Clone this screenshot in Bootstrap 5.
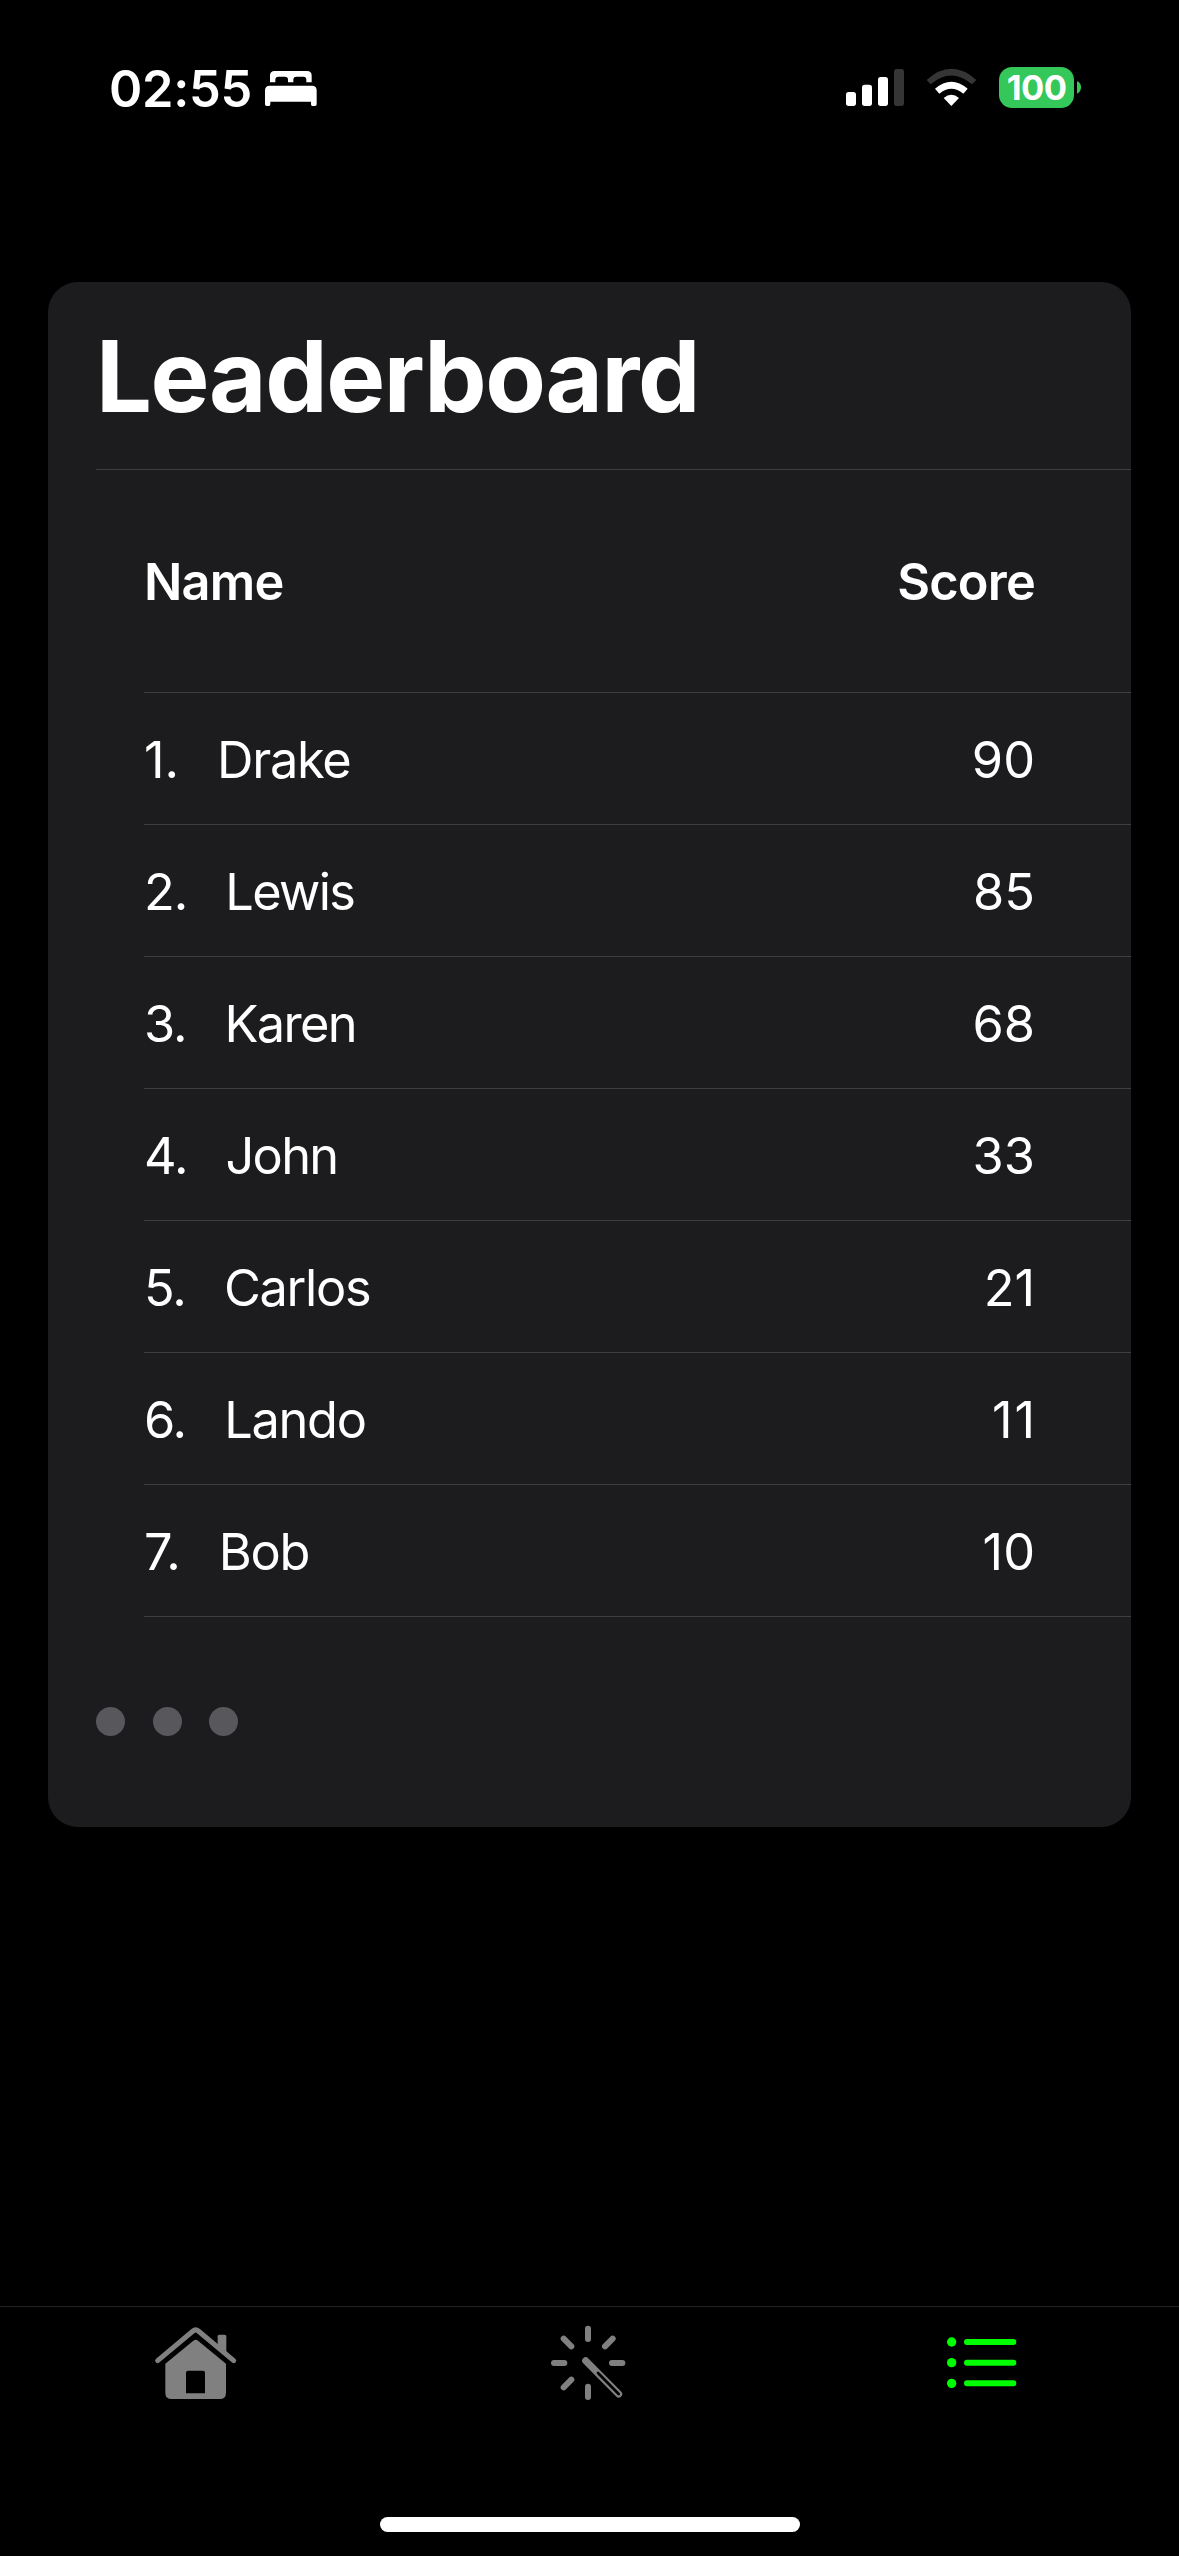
<!DOCTYPE html>
<html lang="en">
<head>
<meta charset="utf-8">
<meta name="viewport" content="width=device-width, initial-scale=1">
<title>Leaderboard</title>
<link href="https://cdn.jsdelivr.net/npm/bootstrap@5.3.0/dist/css/bootstrap.min.css" rel="stylesheet">
<style>
body{background:#000;color:#fff;font-family:Inter,"Liberation Sans",sans-serif;font-size:50.5px;line-height:1;height:2556px;overflow:hidden}
.screen{height:2556px}
.status{height:282px;padding:66px 97px 0 109px}
.clock{font-weight:600;font-size:50.5px;line-height:45px;letter-spacing:-.3px}
.status svg{display:block}
.bed{margin-left:12px}
.battery{width:75px;height:41px;margin-top:1px;border-radius:13px;background:#34c759;font-weight:700;font-size:34.5px;line-height:41px;letter-spacing:-.6px}
.board{margin:0 48px;width:1083px;height:1545px;border-radius:30px;background:#1c1c1e;border:0;color:#fff}
.board h1{margin:0 0 0 48px;height:188px;font-size:99px;font-weight:700;line-height:189px;letter-spacing:-1.4px;border-bottom:1px solid #3e3e41}
.line{margin-left:96px;padding:3px 96px 0 0;height:132px;border-bottom:1px solid #3e3e41}
.line.head{height:223px;font-weight:600;letter-spacing:-.8px}
.rank{margin-right:38px}
.rank.wide{letter-spacing:-1px}
.player{letter-spacing:-1.3px}
.player.snug{letter-spacing:-1.7px}
.ones{letter-spacing:2px;margin-right:-2px}
.dot-row{gap:27.6px;padding:90px 0 0 48px}
.dot-row span{width:29px;height:29px;border-radius:50%;background:#58575c}
.tabs{height:250px;border-top:1px solid #222}
.tabs svg{display:block}
.home-bar{width:420px;height:15px;border-radius:8px;background:#fff;margin-bottom:24px}
</style>
</head>
<body>
<div class="screen d-flex flex-column">
  <header class="status d-flex align-items-start justify-content-between">
    <div class="d-flex align-items-start">
      <span class="clock">02:55</span>
      <svg class="bed" width="54" height="43" viewBox="519 48 162 129" fill="#fff"><path d="M537 97V77Q537 63 551 63H648Q662 63 662 77V97H646V89Q646 80 637 80H616Q607 80 607 89V97H591V89Q591 80 582 80H562Q553 80 553 89V97Z"/><path d="M522 163V121Q522 107 536 107H663Q677 107 677 121V163Q677 168 672 168H664Q660 168 660 163V155H538V163Q538 168 534 168H527Q522 168 522 163Z"/></svg>
    </div>
    <div class="d-flex align-items-start">
      <svg width="153" height="43" viewBox="78 48 459 129" fill="#fff"><rect x="78" y="126" width="30" height="42" rx="8"/><rect x="126" y="104" width="30" height="64" rx="8"/><rect x="174" y="81" width="30" height="87" rx="8"/><rect x="222" y="57" width="30" height="111" rx="8" fill="#353535"/>
        <path d="M320 90Q394 23 469 90L456 103Q394 50 332 103Z" fill="#353535"/><path d="M345 116Q394 74 443 116L430 131Q394 101 358 131Z"/><path d="M371 144Q394 124 417 144L394 168Z"/></svg>
      <div class="battery text-center">100</div>
      <svg width="8" height="43" viewBox="762 48 24 129" fill="#34c759"><path d="M771 94Q783 98 783 112T771 131Z"/></svg>
    </div>
  </header>

  <main class="board">
    <h1>Leaderboard</h1>
    <section>
      <div class="line head d-flex align-items-center justify-content-between"><span>Name</span><span>Score</span></div>
      <div class="line d-flex align-items-center"><span class="rank">1.</span><span class="player">Drake</span><span class="ms-auto">90</span></div>
      <div class="line d-flex align-items-center"><span class="rank wide">2.</span><span class="player snug">Lewis</span><span class="ms-auto">85</span></div>
      <div class="line d-flex align-items-center"><span class="rank wide">3.</span><span class="player snug">Karen</span><span class="ms-auto">68</span></div>
      <div class="line d-flex align-items-center"><span class="rank wide">4.</span><span class="player snug">John</span><span class="ms-auto">33</span></div>
      <div class="line d-flex align-items-center"><span class="rank wide">5.</span><span class="player">Carlos</span><span class="ms-auto">21</span></div>
      <div class="line d-flex align-items-center"><span class="rank wide">6.</span><span class="player">Lando</span><span class="ms-auto ones">11</span></div>
      <div class="line d-flex align-items-center"><span class="rank">7.</span><span class="player">Bob</span><span class="ms-auto">10</span></div>
    </section>
    <div class="dot-row d-flex"><span></span><span></span><span></span></div>
  </main>

  <footer class="tabs mt-auto d-flex flex-column justify-content-between align-items-center">
    <nav class="row g-0 w-100">
      <a class="col d-flex justify-content-center" href="#" aria-label="Home"><svg width="100" height="100" viewBox="51 51 300 300"><path d="M263 178V139Q263 134 268 134H284Q289 134 289 139V200Z" fill="#808080"/><path d="M83 212L189 123Q197 116 205 123L311 212" fill="none" stroke="#808080" stroke-width="15" stroke-linecap="round"/><path fill-rule="evenodd" d="M106 221L190 152Q197 146 204 152L288 221V308Q288 327 269 327H125Q106 327 106 308ZM174 242Q168 242 168 248V310H225V248Q225 242 219 242Z" fill="#808080"/></svg></a>
      <a class="col d-flex justify-content-center" href="#" aria-label="Play"><svg width="100" height="100" viewBox="30 51 300 300" fill="none" stroke="#808080" stroke-width="18" stroke-linecap="round"><path d="M174 116V147M174 290V321M72 219H103M246 219H277M101 146L124 169M248 146L225 169M101 292L124 269"/><path d="M167 212L266 312" stroke-width="21"/><path d="M204 249L266 312" stroke="#000" stroke-width="8"/></svg></a>
      <a class="col d-flex justify-content-center" href="#" aria-label="Leaderboard"><svg width="100" height="100" viewBox="39 51 300 300" fill="#0f0" stroke="#0f0" stroke-width="18" stroke-linecap="round"><path d="M141 156H280M141 218H280M141 280H280"/><g stroke="none"><circle cx="95" cy="156" r="14"/><circle cx="95" cy="218" r="14"/><circle cx="95" cy="280" r="14"/></g></svg></a>
    </nav>
    <div class="home-bar"></div>
  </footer>
</div>
<script src="https://cdn.jsdelivr.net/npm/bootstrap@5.3.0/dist/js/bootstrap.bundle.min.js"></script>
</body>
</html>
